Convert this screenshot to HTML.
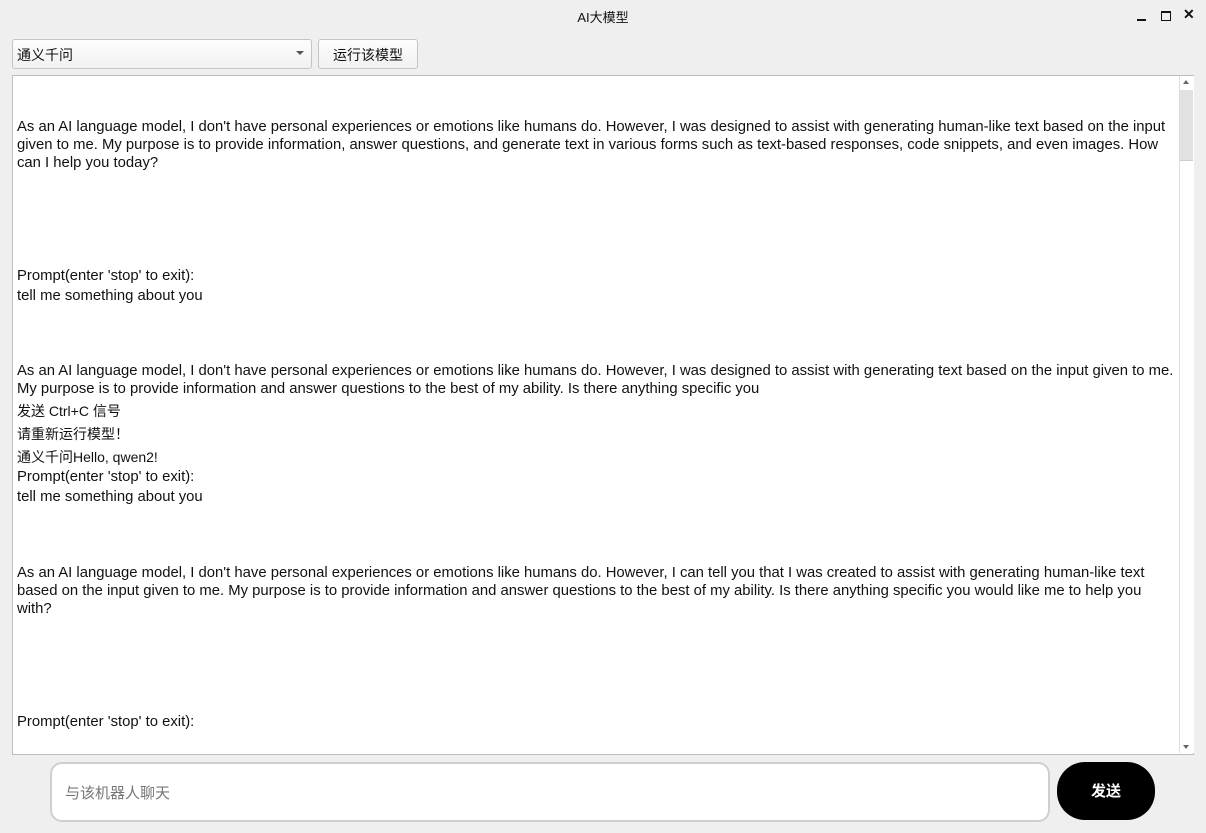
<html><head><style>
body{margin:0;width:1206px;height:833px;background:#efefef;position:relative;overflow:hidden;font-family:"Liberation Sans","Noto Sans CJK SC",sans-serif;color:#111}
.t{position:absolute;left:17px;white-space:nowrap;font-size:14.85px;line-height:18px}
.cj{font-size:14px}
</style></head><body>
<div style="position:absolute;top:7px;width:100%;text-align:center;font-size:13px">AI大模型</div>
<div style="position:absolute;left:1137px;top:19px;width:9px;height:2px;background:#111"></div>
<div style="position:absolute;left:1161px;top:11px;width:8px;height:7px;border:1.5px solid #111;border-top-width:2.5px"></div>
<div style="position:absolute;left:1183px;top:6px;font-size:14px;font-weight:bold">✕</div>
<div style="position:absolute;left:12px;top:39px;width:298px;height:28px;border:1px solid #c4c4c4;border-radius:3px;background:linear-gradient(#fdfdfd,#f1f1f1)"></div>
<div class="t" style="top:46px;left:17px;font-size:14px">通义千问</div>
<div style="position:absolute;left:296px;top:51px;border-left:4px solid transparent;border-right:4px solid transparent;border-top:4px solid #555"></div>
<div style="position:absolute;left:318px;top:39px;width:98px;height:28px;border:1px solid #c4c4c4;border-radius:3px;background:linear-gradient(#fdfdfd,#f1f1f1);text-align:center;line-height:30px;font-size:14px">运行该模型</div>
<div style="position:absolute;left:12px;top:75px;width:1180px;height:678px;border:1px solid #bdbdbd;background:#fff"></div>
<div style="position:absolute;left:1179px;top:76px;width:14px;height:677px;border-left:1px solid #ddd;background:#fff"></div>
<div style="position:absolute;left:1180px;top:90px;width:13px;height:70px;background:#e1e1e1;border-bottom:1px solid #ccc"></div>
<div style="position:absolute;left:1183px;top:80px;border-left:3.5px solid transparent;border-right:3.5px solid transparent;border-bottom:4px solid #666"></div>
<div style="position:absolute;left:1183px;top:745px;border-left:3.5px solid transparent;border-right:3.5px solid transparent;border-top:4px solid #666"></div>
<div class="t" style="top:118px">As an AI language model, I don't have personal experiences or emotions like humans do. However, I was designed to assist with generating human-like text based on the input</div>
<div class="t" style="top:136px">given to me. My purpose is to provide information, answer questions, and generate text in various forms such as text-based responses, code snippets, and even images. How</div>
<div class="t" style="top:154px">can I help you today?</div>
<div class="t" style="top:267px">Prompt(enter 'stop' to exit):</div>
<div class="t" style="top:287px">tell me something about you</div>
<div class="t" style="top:362px">As an AI language model, I don't have personal experiences or emotions like humans do. However, I was designed to assist with generating text based on the input given to me.</div>
<div class="t" style="top:380px">My purpose is to provide information and answer questions to the best of my ability. Is there anything specific you</div>
<div class="t cj" style="top:402px">发送 Ctrl+C 信号</div>
<div class="t cj" style="top:425px">请重新运行模型！</div>
<div class="t cj" style="top:448px">通义千问Hello, qwen2!</div>
<div class="t" style="top:468px">Prompt(enter 'stop' to exit):</div>
<div class="t" style="top:488px">tell me something about you</div>
<div class="t" style="top:564px">As an AI language model, I don't have personal experiences or emotions like humans do. However, I can tell you that I was created to assist with generating human-like text</div>
<div class="t" style="top:582px">based on the input given to me. My purpose is to provide information and answer questions to the best of my ability. Is there anything specific you would like me to help you</div>
<div class="t" style="top:600px">with?</div>
<div class="t" style="top:713px">Prompt(enter 'stop' to exit):</div>
<div style="position:absolute;left:50px;top:762px;width:996px;height:56px;border:2px solid #cfcfcf;border-radius:12px;background:#fff"></div>
<div style="position:absolute;left:65px;top:782px;font-size:15px;color:#777">与该机器人聊天</div>
<div style="position:absolute;left:1057px;top:762px;width:98px;height:58px;border-radius:28px;background:#000;color:#fff;text-align:center;line-height:60px;font-size:15px;font-weight:bold">发送</div>
</body></html>
